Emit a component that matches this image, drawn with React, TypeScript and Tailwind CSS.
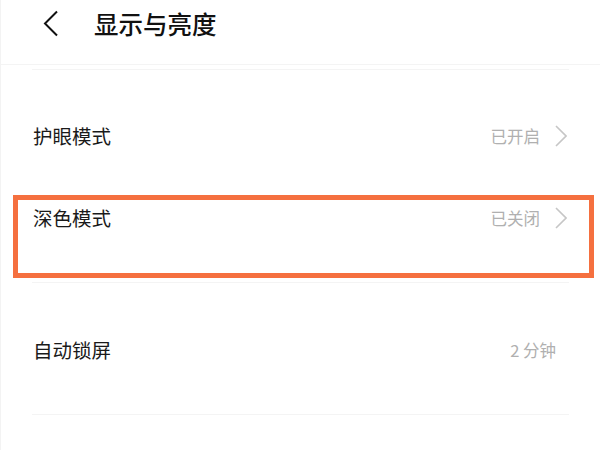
import React from "react";

const BackIcon = () => (
  <svg width="16" height="27" viewBox="0 0 16 27" fill="none">
    <path d="M14 1.5L2 13.5L14 25.5" stroke="#111" strokeWidth="2" strokeLinejoin="miter" />
  </svg>
);

const ChevronRight = () => (
  <svg width="12" height="22" viewBox="0 0 12 22" fill="none">
    <path d="M1 1L11 11L1 21" stroke="#c6c6c6" strokeWidth="1.6" />
  </svg>
);

type RowProps = {
  label: string;
  value: string;
  arrow?: boolean;
};

const RowContent = ({ label, value, arrow }: RowProps) => (
  <div className="flex items-center justify-between h-[30px]">
    <span className="text-[19.5px] leading-[30px] text-[#1a1a1a]">{label}</span>
    <div className="flex items-center gap-[15px]">
      <span className="text-[16.5px] leading-[30px] text-[#b0b0b0]">{value}</span>
      {arrow && <ChevronRight />}
    </div>
  </div>
);

export default function App() {
  return (
    <div
      className="w-[600px] h-[450px] bg-white overflow-hidden border-l border-[#f3f3f3]"
      style={{ fontFamily: '"Noto Sans CJK SC", "Noto Sans", sans-serif' }}
    >
      {/* header */}
      <div className="h-[65px] flex items-start pt-[10px] pl-[42px] border-b border-[#f4f4f4]">
        <BackIcon />
        <span className="ml-[35px] text-[24.5px] leading-[28px] font-medium text-[#111]">
          显示与亮度
        </span>
      </div>
      <div className="mt-[4px] mx-[31px] h-px bg-[#f4f4f4]" />

      {/* eye care */}
      <div className="h-[125px] pt-[51px] pl-[32px] pr-[33px]">
        <RowContent label="护眼模式" value="已开启" arrow />
      </div>

      {/* dark mode (highlighted) */}
      <div className="ml-[12px] mr-[6px] h-[83px] border-[5px] border-[#f5703f] pt-[3px] pl-[15px] pr-[22px]">
        <RowContent label="深色模式" value="已关闭" arrow />
      </div>
      <div className="mt-[4px] mx-[31px] h-px bg-[#f4f4f4]" />

      {/* auto lock */}
      <div className="h-[131px] pt-[52px] pl-[32px] pr-[44px]">
        <RowContent label="自动锁屏" value="2 分钟" />
      </div>
      <div className="mx-[31px] h-px bg-[#f4f4f4]" />
    </div>
  );
}
